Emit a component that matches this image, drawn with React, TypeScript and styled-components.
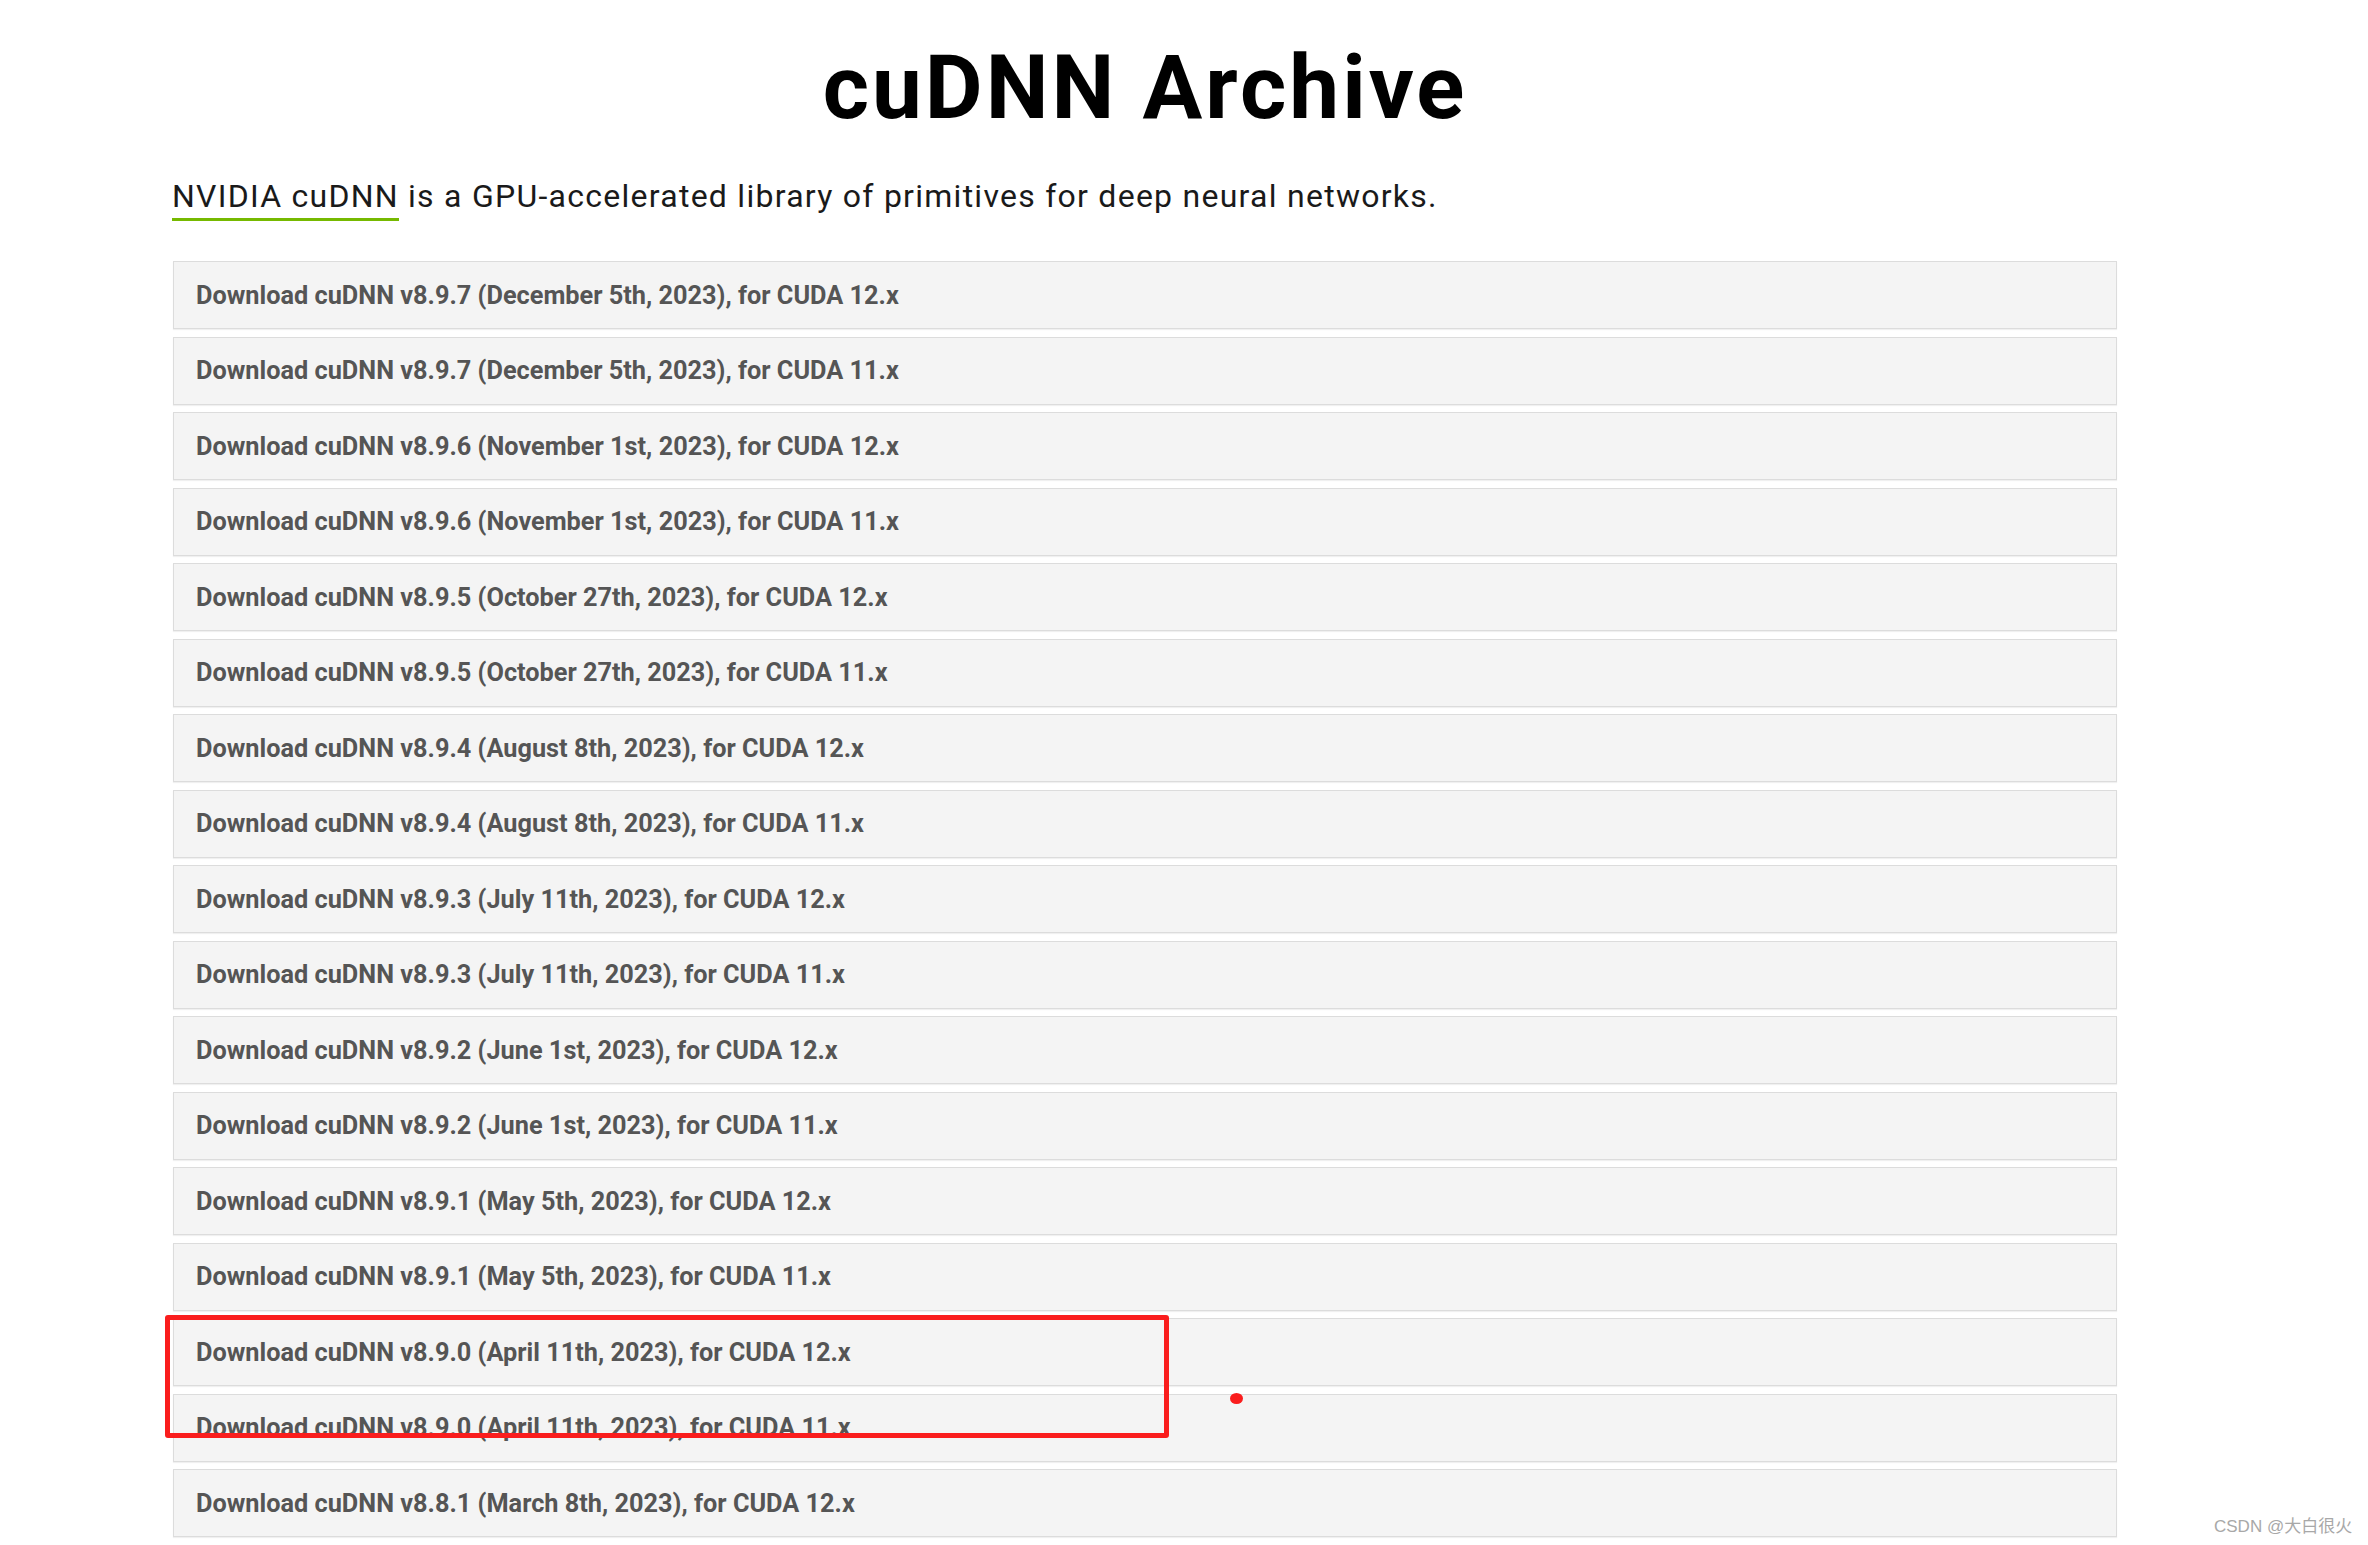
import React from "react";
import styled, { createGlobalStyle } from "styled-components";

const GlobalStyle = createGlobalStyle`
  html, body {
    margin: 0;
    padding: 0;
    background: #ffffff;
  }
  body {
    font-family: Roboto, "Liberation Sans", sans-serif;
    color: #1a1a1a;
  }
`;

const Page = styled.main`
  position: relative;
  min-height: 1545px;
  overflow: hidden;
`;

const Content = styled.section`
  margin-left: 173px;
  width: 1944px;
  display: flex;
  flex-direction: column;
`;

const Title = styled.h1`
  margin: 44px 0 0;
  font-family: Roboto, "Liberation Sans", sans-serif;
  font-weight: 700;
  font-size: 89px;
  line-height: 88px;
  letter-spacing: 3px;
  text-align: center;
  color: #000;
`;

const Intro = styled.p`
  margin: 48px 0 0;
  font-size: 32px;
  line-height: 32px;
  letter-spacing: 1.26px;
  font-weight: 400;
  color: #1a1a1a;
  white-space: nowrap;
`;

const GreenLink = styled.a`
  color: #1a1a1a;
  text-decoration: none;
  padding-bottom: 3px;
  margin-left: -1px;
  border-bottom: 3px solid #76b900;
`;

const List = styled.div`
  position: relative;
  margin-top: 49px;
  display: flex;
  flex-direction: column;
  gap: 7.5px;
`;

const Row = styled.div`
  box-sizing: border-box;
  height: 68px;
  display: flex;
  align-items: center;
  padding-left: 22px;
  background: #f4f4f4;
  border: 1px solid #dcdcdc;
  box-shadow: 0 1px 1px rgba(0, 0, 0, 0.06);
`;

const RowLabel = styled.span`
  font-family: Roboto, "Liberation Sans", sans-serif;
  font-weight: 700;
  font-size: 25.3px;
  color: #555555;
  white-space: nowrap;
`;

const Highlight = styled.div`
  position: absolute;
  left: -8px;
  top: 1054px;
  width: 1004px;
  height: 123px;
  box-sizing: border-box;
  border: 5px solid #fa1d1d;
  border-radius: 3px;
  pointer-events: none;
`;

const Dot = styled.div`
  position: absolute;
  left: 1057px;
  top: 1132px;
  width: 13px;
  height: 11px;
  border-radius: 50%;
  background: #fa1d1d;
`;

const Watermark = styled.div`
  position: absolute;
  left: 2214px;
  top: 1517px;
  font-family: "Liberation Sans", "Noto Sans CJK SC", sans-serif;
  font-size: 17px;
  line-height: 20px;
  color: #a8a8a8;
  white-space: nowrap;
`;

const releases = [
  "Download cuDNN v8.9.7 (December 5th, 2023), for CUDA 12.x",
  "Download cuDNN v8.9.7 (December 5th, 2023), for CUDA 11.x",
  "Download cuDNN v8.9.6 (November 1st, 2023), for CUDA 12.x",
  "Download cuDNN v8.9.6 (November 1st, 2023), for CUDA 11.x",
  "Download cuDNN v8.9.5 (October 27th, 2023), for CUDA 12.x",
  "Download cuDNN v8.9.5 (October 27th, 2023), for CUDA 11.x",
  "Download cuDNN v8.9.4 (August 8th, 2023), for CUDA 12.x",
  "Download cuDNN v8.9.4 (August 8th, 2023), for CUDA 11.x",
  "Download cuDNN v8.9.3 (July 11th, 2023), for CUDA 12.x",
  "Download cuDNN v8.9.3 (July 11th, 2023), for CUDA 11.x",
  "Download cuDNN v8.9.2 (June 1st, 2023), for CUDA 12.x",
  "Download cuDNN v8.9.2 (June 1st, 2023), for CUDA 11.x",
  "Download cuDNN v8.9.1 (May 5th, 2023), for CUDA 12.x",
  "Download cuDNN v8.9.1 (May 5th, 2023), for CUDA 11.x",
  "Download cuDNN v8.9.0 (April 11th, 2023), for CUDA 12.x",
  "Download cuDNN v8.9.0 (April 11th, 2023), for CUDA 11.x",
  "Download cuDNN v8.8.1 (March 8th, 2023), for CUDA 12.x",
  "Download cuDNN v8.8.1 (March 8th, 2023), for CUDA 11.x",
];

export default function App() {
  return (
    <Page>
      <GlobalStyle />
      <Content>
        <Title>cuDNN Archive</Title>
        <Intro>
          <GreenLink href="#">NVIDIA cuDNN</GreenLink> is a GPU-accelerated library of primitives for deep neural networks.
        </Intro>
        <List>
          {releases.map((r) => (
            <Row key={r}>
              <RowLabel>{r}</RowLabel>
            </Row>
          ))}
          <Highlight />
          <Dot />
        </List>
      </Content>
      <Watermark>CSDN @大白很火</Watermark>
    </Page>
  );
}
